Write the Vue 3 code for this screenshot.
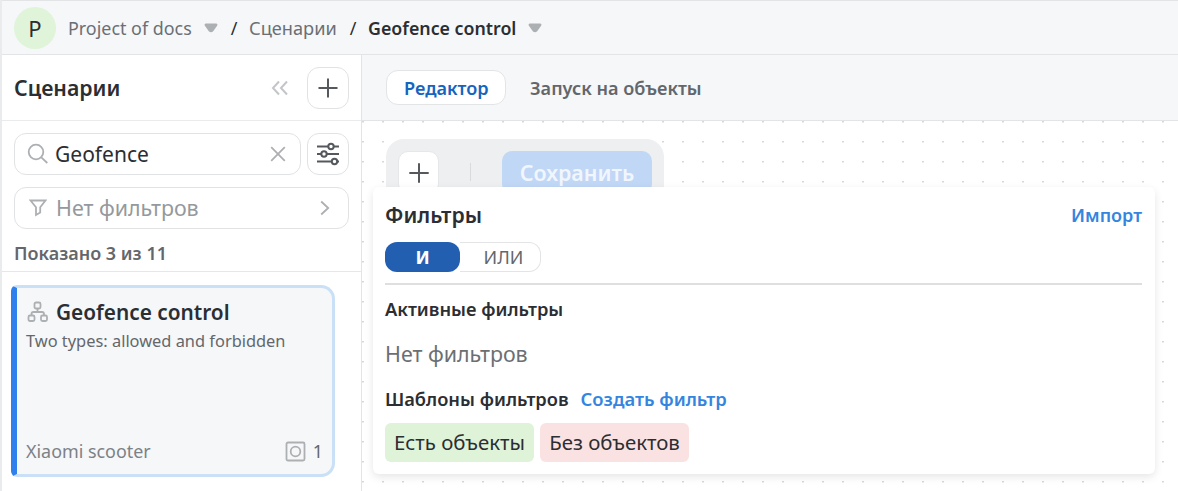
<template>
  <div class="app">
    <header class="topbar">
      <div class="avatar">P</div>
      <span class="crumb project">Project of docs</span>
      <svg class="caret" width="14" height="10" viewBox="0 0 14 10"><path d="M1.6.5h10.800q1.600.5.700 2.200L9.200 8.200Q7 10.300 4.800 8.200L.9 2.700Q0 1 1.600.5z" /></svg>
      <span class="slash">/</span>
      <span class="crumb section">Сценарии</span>
      <span class="slash">/</span>
      <span class="crumb current">Geofence control</span>
      <svg class="caret" width="14" height="10" viewBox="0 0 14 10"><path d="M1.6.5h10.800q1.600.5.700 2.200L9.200 8.200Q7 10.300 4.800 8.200L.9 2.700Q0 1 1.600.5z" /></svg>
    </header>

    <div class="body">
      <aside class="sidebar">
        <div class="side-head">
          <h2>Сценарии</h2>
          <svg class="collapse" width="18" height="16" viewBox="0 0 18 16"><path d="M8 1.500 2 8l6 6.500M16 1.500 10 8l6 6.500" /></svg>
          <button class="square">
            <svg width="20" height="20" viewBox="0 0 20 20"><path d="M10 .5v19M.5 10h19" /></svg>
          </button>
        </div>

        <div class="side-tools">
          <div class="search-row">
            <div class="field search">
              <svg class="gray" width="22" height="22" viewBox="0 0 22 22"><circle cx="9" cy="9" r="7.300" /><path d="m14.300 14.300 6 5.700" /></svg>
              <span class="query">{{ searchTerm }}</span>
              <svg class="gray clear" width="16" height="16" viewBox="0 0 16 16"><path d="m1.200 1.200 13.600 13.600M14.800 1.200 1.200 14.800" /></svg>
            </div>
            <button class="square">
              <svg width="24" height="24" viewBox="0 0 24 24"><path d="M1 4.500h11.200M17.800 4.500h5.200M1 12h4.200M10.800 12H23M1 19.500h14.700M21.300 19.500h1.700" /><circle cx="15" cy="4.500" r="2.700" /><circle cx="8" cy="12" r="2.700" /><circle cx="18.500" cy="19.500" r="2.700" /></svg>
            </button>
          </div>
          <div class="field filter">
            <svg class="gray" width="18" height="18" viewBox="0 0 18 18"><path d="M1.500 1.500h15l-5.300 6.800v5.200L7 16V8.300z" /></svg>
            <span class="placeholder">Нет фильтров</span>
            <svg class="gray arrow" width="10" height="16" viewBox="0 0 10 16"><path d="m1.200 1.500 7 6.500-7 6.500" /></svg>
          </div>
          <div class="count">Показано 3 из 11</div>
        </div>

        <div class="card">
          <div class="card-title">
            <svg class="gray" width="22" height="22" viewBox="0 0 22 22"><rect x="8.500" y="1.500" width="6" height="6" rx="1.500" /><rect x="2.500" y="14.500" width="6" height="5.500" rx="1.500" /><rect x="15" y="14.500" width="6" height="5.500" rx="1.500" /><path d="M11.500 7.500V11M5.500 14.500V13q0-2 2-2h8.500q2 0 2 2v1.500" /></svg>
            <h3>Geofence control</h3>
          </div>
          <p>Two types: allowed and forbidden</p>
          <div class="card-foot">
            <span class="model">Xiaomi scooter</span>
            <svg class="gray" width="21" height="21" viewBox="0 0 21 21"><rect x="1.500" y="1.500" width="18" height="18" rx="1.500" /><circle cx="10.500" cy="10.500" r="4.800" /></svg>
            <span class="amount">1</span>
          </div>
        </div>
      </aside>

      <main class="main">
        <nav class="tabs">
          <a class="tab active">Редактор</a>
          <a class="tab">Запуск на объекты</a>
        </nav>
        <div class="canvas">
          <div class="toolbar">
            <button class="add">
              <svg width="20" height="20" viewBox="0 0 20 20"><path d="M10 .3v19.400M.3 10h19.400" /></svg>
            </button>
            <span class="divider"></span>
            <button class="save">Сохранить</button>
          </div>
        </div>
      </main>
    </div>

    <section class="popup">
      <div class="popup-head">
        <h4>Фильтры</h4>
        <a class="link">Импорт</a>
      </div>
      <div class="toggle">
        <button
          v-for="m in modes"
          :key="m"
          :class="{ on: m === mode }"
          @click="mode = m"
        ><span>{{ m }}</span></button>
      </div>
      <h5 class="active-title">Активные фильтры</h5>
      <p class="empty">Нет фильтров</p>
      <div class="templates">
        <h5>Шаблоны фильтров</h5>
        <a class="link create">Создать фильтр</a>
      </div>
      <div class="chips">
        <span v-for="t in templates" :key="t.label" class="chip" :class="t.color">{{ t.label }}</span>
      </div>
    </section>
  </div>
</template>

<script setup>
import { ref } from 'vue'

const searchTerm = ref('Geofence')
const modes = ['И', 'ИЛИ']
const mode = ref('И')
const templates = [
  { label: 'Есть объекты', color: 'green' },
  { label: 'Без объектов', color: 'red' },
]
</script>

<style>
body {
  overflow: hidden;
}
</style>

<style scoped>
* {
  box-sizing: border-box;
}

.app {
  position: relative;
  display: flex;
  flex-direction: column;
  width: 1178px;
  height: 491px;
  border-left: 2px solid #e9ebec;
  background: #fff;
  color: #2b2e33;
  font-family: 'Noto Sans', 'Open Sans', sans-serif;
  overflow: hidden;
  white-space: nowrap;
}

h2, h3, h4, h5, p {
  margin: 0;
  font-weight: 600;
}

button {
  padding: 0;
  font-family: inherit;
}

svg {
  flex: none;
  fill: none;
  stroke: #55585c;
  stroke-width: 2;
}

svg.gray {
  stroke: #adb0b3;
  stroke-width: 1.800;
}

.topbar {
  display: flex;
  align-items: center;
  height: 55px;
  padding: 1px 0 0 12px;
  border-top: 1px solid #e2e4e6;
  border-bottom: 1px solid #e2e4e6;
  background: #f5f7f9;
  font-size: 17.900px;
}

.avatar {
  width: 42px;
  height: 42px;
  margin-right: 12px;
  border-radius: 50%;
  background: #dff4d8;
  font-size: 22px;
  line-height: 42px;
  text-align: center;
}

.crumb {
  color: #6b6f74;
}

.project {
  width: 124px;
}

.section {
  width: 88px;
  font-size: 18.200px;
}

.crumb.current {
  width: 148px;
  color: #2b2e33;
  font-size: 17.800px;
  font-weight: 600;
}

.caret {
  margin-left: 12px;
  stroke: none;
  fill: #adb0b3;
}

.slash {
  width: 8px;
  margin: 0 11px 0 12px;
  text-align: center;
}

.body {
  display: flex;
  flex: 1;
}

.sidebar {
  width: 360px;
  border-right: 1px solid #e2e4e6;
}

.side-head {
  display: flex;
  align-items: center;
  height: 66px;
  padding: 0 12px;
  border-bottom: 1px solid #e9ebec;
}

.side-head h2 {
  font-size: 21.250px;
}

.collapse {
  margin: 0 18px 0 auto;
  stroke: #c3c5c8;
}

.square {
  display: flex;
  flex: none;
  align-items: center;
  justify-content: center;
  width: 42px;
  height: 42px;
  border: 1px solid #e0e2e4;
  border-radius: 12px;
  background: #fff;
}

.side-tools {
  height: 151px;
  padding: 12px 12px 0;
  border-bottom: 1px solid #e5e7e8;
}

.search-row {
  display: flex;
  gap: 6px;
}

.field {
  display: flex;
  align-items: center;
  height: 42px;
  border: 1px solid #e0e2e4;
  border-radius: 12px;
  font-size: 21px;
}

.search {
  width: 287px;
  padding: 0 14px 0 12px;
}

.query {
  margin-left: 6px;
}

.clear {
  margin-left: auto;
}

.filter {
  margin-top: 12px;
  padding: 0 18px 0 14px;
  color: #95999d;
}

.placeholder {
  margin-left: 9px;
  font-size: 21.400px;
  line-height: 28px;
}

.arrow {
  margin-left: auto;
}

.count {
  margin-top: 11px;
  color: #63676c;
  font-size: 18px;
  font-weight: 600;
  line-height: 26px;
}

.card {
  display: flex;
  flex-direction: column;
  width: 324px;
  height: 192px;
  margin: 13px 0 0 9px;
  padding: 9px 9px 11px 9px;
  border: 3px solid #c9e0f6;
  border-left: 6px solid #2f80ed;
  border-radius: 6px 14px 14px 6px;
  background: #f5f7f9;
}

.card-title {
  display: flex;
  align-items: center;
  gap: 8px;
  height: 30px;
}

.card-title h3 {
  font-size: 20.800px;
  line-height: 30px;
}

.card p {
  margin-top: 1px;
  color: #63676c;
  font-size: 16.400px;
  font-weight: 400;
  line-height: 26px;
}

.card-foot {
  display: flex;
  align-items: center;
  margin-top: auto;
  color: #7d8186;
  font-size: 17.900px;
}

.card-foot svg {
  margin: 0 7px 0 auto;
}

.amount {
  color: #63676c;
}

.main {
  flex: 1;
}

.tabs {
  display: flex;
  align-items: center;
  gap: 6px;
  height: 66px;
  padding-left: 24px;
  border-bottom: 1px solid #e2e4e6;
  background: #f5f7f9;
}

.tab {
  height: 35px;
  padding: 0 17px;
  border: 1px solid transparent;
  border-radius: 12px;
  color: #63676c;
  font-size: 18.100px;
  font-weight: 600;
  line-height: 35px;
}

.tab.active {
  width: 120px;
  border-color: #e2e4e6;
  background: #fff;
  color: #1464c0;
}

.canvas {
  height: 370px;
  padding: 18px 0 0 24px;
  background: radial-gradient(circle at 1px 0.600px, #d5d7d9 0.700px, transparent 1.300px) 0 0 / 20px 20px;
}

.toolbar {
  display: flex;
  width: 278px;
  height: 70px;
  padding: 12px;
  border-radius: 18px;
  background: #edeff0;
}

.add {
  display: flex;
  align-items: center;
  justify-content: center;
  width: 41px;
  height: 43px;
  border: 1px solid #e5e7e8;
  border-radius: 10px;
  background: #fff;
}

.divider {
  width: 1px;
  height: 18px;
  margin: 12px 31px 0;
  background: #d8dadc;
}

.save {
  width: 150px;
  height: 43px;
  border: 0;
  border-radius: 10px;
  background: #c1d7f6;
  color: #f1f6fd;
  font-size: 21.400px;
  font-weight: 600;
}

.popup {
  position: absolute;
  top: 187px;
  left: 371px;
  width: 782px;
  height: 287px;
  padding: 14px 13px 0 12px;
  border-radius: 6px;
  background: #fff;
  box-shadow: 0 3px 8px rgba(0, 0, 0, 0.1);
}

.popup-head {
  display: flex;
  justify-content: space-between;
  height: 41px;
  line-height: 28px;
}

.popup-head h4 {
  font-size: 21.200px;
}

.link {
  color: #3585df;
  font-size: 18px;
  font-weight: 600;
}

.toggle {
  position: relative;
  display: flex;
  height: 43px;
  border-bottom: 2px solid #dfdfe0;
}

.toggle button {
  width: 81px;
  height: 30px;
  padding-left: 7px;
  border: 1px solid #e2e4e6;
  border-left: 0;
  border-radius: 0 12px 12px 0;
  background: #fff;
  color: #63676c;
  font-size: 18px;
  line-height: 28px;
}

.toggle button.on {
  width: 75px;
  padding: 0;
  border: 0;
  border-radius: 12px;
  background: #235fb0;
  color: #fff;
  font-weight: 700;
}

h5 {
  font-size: 18.250px;
  line-height: 24px;
}

.active-title {
  margin-top: 12px;
}

.empty {
  margin-top: 18px;
  color: #6b6f74;
  font-size: 21.400px;
  font-weight: 400;
  line-height: 30px;
}

.templates {
  display: flex;
  gap: 12px;
  margin-top: 18px;
  line-height: 24px;
}

.create {
  font-size: 18.400px;
}

.chips {
  display: flex;
  gap: 6px;
  margin-top: 12px;
}

.chip {
  width: 149px;
  height: 39px;
  border-radius: 6px;
  font-size: 20.400px;
  line-height: 39px;
  text-align: center;
}

.green {
  background: #def3d7;
}

.red {
  background: #fbe2e2;
}
</style>
